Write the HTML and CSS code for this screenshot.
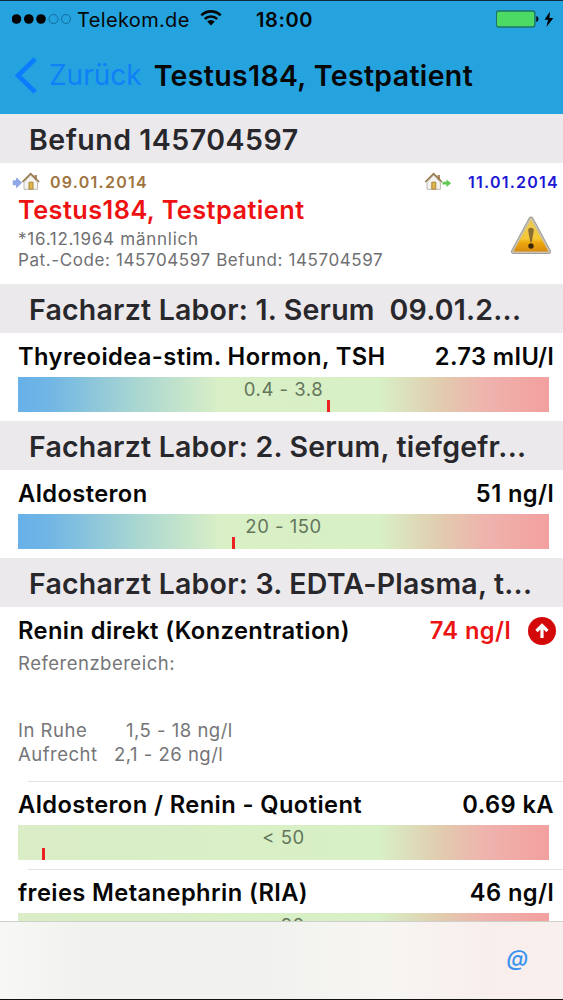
FILE: index.html
```html
<!DOCTYPE html>
<html lang="de">
<head>
  <meta charset="UTF-8">
  <title>Befund 145704597</title>
  <link rel="stylesheet" href="styles.css">
</head>
<body>
  <div class="app">
    <header class="header">
      <div class="statusbar">
        <div class="carrier">
          <svg class="signal" width="60" height="12" viewBox="0 0 60 12">
            <circle cx="4.5" cy="6" r="4.8"/>
            <circle cx="16.8" cy="6" r="4.8"/>
            <circle cx="29" cy="6" r="4.8"/>
            <circle class="off" cx="41.5" cy="6" r="4.5"/>
            <circle class="off" cx="54" cy="6" r="4.5"/>
          </svg>
          <span class="carrier-name">Telekom.de</span>
          <svg class="wifi" width="22" height="16" viewBox="0 0 22 16">
            <path class="arc" d="M1.3 5.4a13.8 13.8 0 0 1 19.4 0M4.8 9a8.8 8.8 0 0 1 12.4 0"/>
            <path d="M7.2 11.6a5.4 5.4 0 0 1 7.6 0L11 15.6z"/>
          </svg>
        </div>
        <span class="time">18:00</span>
        <svg class="battery" width="60" height="18" viewBox="0 0 60 18">
          <rect class="level" x=".3" y="1" width="38.6" height="16" rx="2.5"/>
          <path d="M40.3 6q2.2.6 2.2 3t-2.2 3z"/>
          <path d="M54 1.5L48.5 9.8h3.6L50.4 17l7-9h-4z"/>
        </svg>
      </div>
      <div class="navbar">
        <svg class="chevron" width="24" height="37" viewBox="0 0 24 37">
          <path d="M21.2 1.8L4 18.5l17.2 16.7"/>
        </svg>
        <span class="back">Zurück</span>
        <span class="title">Testus184, Testpatient</span>
      </div>
    </header>

    <main class="list">
      <h2 class="section number">Befund 145704597</h2>
      <div class="patient">
        <div class="dates">
          <svg class="house-in" width="28" height="20" viewBox="0 0 28 20">
            <path class="arrow-blue" d="M1.2 8.8h3.4V6l5 4.8-5 4.8v-2.8H1.2z"/>
            <path class="chimney" d="M22.4 3H25v5h-2.6z"/>
            <path class="wall" d="M12 10.2L18.7 3l6.8 7.2V17.3H12z"/>
            <path class="roof" d="M10.3 10l8.4-8.4 8.4 8.4"/>
            <path class="door" d="M17 10.2h4v7h-4z"/>
          </svg>
          <span class="date-in">09.01.2014</span>
          <svg class="house-out" width="28" height="20" viewBox="0 0 28 20">
            <path class="chimney" d="M13.4 3H16v5h-2.6z"/>
            <path class="wall" d="M3 10.2L9.6 3l6.8 7.2V17.3H3z"/>
            <path class="roof" d="M1.2 10l8.4-8.4L18 10"/>
            <path class="door" d="M7.8 10.2h4v7h-4z"/>
            <path class="arrow-green" d="M18.5 9.8h4V7.5l4.6 3.7-4.6 3.7v-2.3h-4z"/>
          </svg>
          <span class="date-out">11.01.2014</span>
        </div>
        <div class="patient-body">
          <div>
            <div class="patient-name">Testus184, Testpatient</div>
            <div class="patient-info born">*16.12.1964 männlich</div>
            <div class="patient-info">Pat.-Code: 145704597 Befund: 145704597</div>
          </div>
          <svg class="warning" width="42" height="42" viewBox="0 0 42 42">
            <defs>
              <linearGradient id="amber" x1="0" y1="0" x2="0" y2="1">
                <stop offset="0" stop-color="#e9c95c"/>
                <stop offset=".6" stop-color="#f6c836"/>
                <stop offset=".72" stop-color="#eda90f"/>
                <stop offset="1" stop-color="#d98a10"/>
              </linearGradient>
            </defs>
            <path class="edge" d="M21 4L3.5 36.5h35z"/>
            <path class="rim" d="M21 4L3.5 36.5h35z"/>
            <path fill="url(#amber)" d="M21 4L3.5 36.5h35z"/>
            <path class="mark" d="M18.2 15.5q0-2.8 2.8-2.8t2.8 2.8L21.8 27h-1.6z"/>
            <circle class="dot" cx="21" cy="31" r="2.7"/>
          </svg>
        </div>
      </div>

      <h2 class="section">Facharzt Labor: 1. Serum&nbsp; 09.01.2...</h2>
      <div class="result">
        <div class="result-head"><span>Thyreoidea-stim. Hormon, TSH</span><span>2.73 mIU/l</span></div>
        <div class="bar">0.4 - 3.8<i class="tick" style="left: 309px"></i></div>
      </div>

      <h2 class="section">Facharzt Labor: 2. Serum, tiefgefr...</h2>
      <div class="result">
        <div class="result-head"><span>Aldosteron</span><span>51 ng/l</span></div>
        <div class="bar">20 - 150<i class="tick" style="left: 214px"></i></div>
      </div>

      <h2 class="section">Facharzt Labor: 3. EDTA-Plasma, t...</h2>
      <div class="result tall">
        <div class="result-head">
          <span>Renin direkt (Konzentration)</span>
          <span class="high">74 ng/l
            <svg class="up" width="28" height="28" viewBox="0 0 28 28">
              <circle cx="14" cy="14" r="14"/>
              <path d="M14 21V9M8.5 14L14 8.5l5.5 5.5"/>
            </svg>
          </span>
        </div>
        <div class="reference">Referenzbereich:</div>
        <div class="ranges">
          <div><span class="in-ruhe">In Ruhe</span>1,5 - 18 ng/l</div>
          <div><span class="aufrecht">Aufrecht</span>2,1 - 26 ng/l</div>
        </div>
      </div>
      <div class="result lined">
        <div class="result-head"><span>Aldosteron / Renin - Quotient</span><span>0.69 kA</span></div>
        <div class="bar upper">&lt; 50<i class="tick" style="left: 24px"></i></div>
      </div>
      <div class="result lined">
        <div class="result-head"><span>freies Metanephrin (RIA)</span><span>46 ng/l</span></div>
        <div class="bar upper">&lt; 90</div>
      </div>
    </main>

    <footer class="toolbar"><span class="at">@</span></footer>
  </div>
</body>
</html>
```
FILE: styles.css
```css
* {
  box-sizing: border-box;
}

body {
  margin: 0;
  font-family: Inter, "Liberation Sans", sans-serif;
  background: #fff;
  color: #060606;
}

.app {
  display: flex;
  flex-direction: column;
  width: 563px;
  height: 1000px;
  overflow: hidden;
  white-space: nowrap;
  border-top: 1px solid #10283c;
  border-bottom: 1px solid #111;
}

/* header */
.header {
  flex: none;
  height: 113px;
  background: #24a3df;
}

.statusbar {
  display: grid;
  grid-template-columns: 256px 1fr 67px;
  align-items: center;
  height: 36px;
}

.carrier {
  display: flex;
  align-items: center;
  padding-left: 12px;
}

.carrier-name {
  margin: 2px 10px 0 5px;
  font-size: 20px;
  letter-spacing: 0.35px;
}

.wifi {
  margin-top: -2px;
}

.off {
  fill: none;
  stroke: #126d9c;
}

.arc {
  fill: none;
  stroke: #060606;
  stroke-width: 2.6;
}

.time {
  margin-top: 2px;
  font-size: 20px;
  font-weight: 600;
  letter-spacing: 0.6px;
}

.level {
  fill: #4cd964;
  stroke: #1c7367;
  stroke-width: 1.4;
}

.navbar {
  display: flex;
  align-items: center;
  height: 76px;
  padding-left: 14px;
}

.chevron path {
  fill: none;
  stroke: #0a7cff;
  stroke-width: 4.6;
}

.back {
  margin-left: 11px;
  font-size: 28px;
  color: #0f80f7;
}

.title {
  margin-left: 12px;
  font-size: 28.5px;
  font-weight: 600;
  letter-spacing: 0.35px;
}

/* list */
.list {
  flex: 1;
  min-height: 0;
  overflow: hidden;
}

.section {
  height: 49px;
  margin: 0;
  padding-left: 29px;
  line-height: 52px;
  font-size: 28.5px;
  font-weight: 600;
  letter-spacing: 0.22px;
  color: #28272b;
  background: #ebe9eb;
}

.section.number {
  letter-spacing: 0.52px;
}

.patient {
  height: 121px;
  padding: 9px 5px 0 12px;
}

.dates {
  display: flex;
  align-items: center;
  height: 20px;
  font-size: 16px;
  font-weight: 600;
  letter-spacing: 1.25px;
}

.date-in {
  margin: 0 auto 0 10px;
  color: #a07440;
}

.date-out {
  margin: 0 -1px 0 16px;
  color: #1c18d4;
}

.wall {
  fill: #f5f3ee;
  stroke: #bdb9b5;
}

.roof {
  fill: none;
  stroke: #97794a;
  stroke-width: 1.6;
}

.chimney {
  fill: #b08d62;
}

.door {
  fill: #dfb54a;
  stroke: #a8873e;
}

.arrow-blue {
  fill: #8fa9ea;
  stroke: #7590d8;
  stroke-width: 0.7;
}

.arrow-green {
  fill: #62c754;
}

.patient-body {
  display: flex;
  justify-content: space-between;
  padding: 0 6px;
}

.patient-name {
  height: 36px;
  line-height: 35px;
  font-size: 25.3px;
  font-weight: 600;
  letter-spacing: 0.45px;
  color: #ee1111;
}

.patient-info {
  height: 21px;
  line-height: 22px;
  font-size: 17px;
  letter-spacing: 0.6px;
  color: #707072;
}

.born {
  letter-spacing: 0.75px;
}

.warning {
  margin-top: 23px;
}

.edge,
.rim {
  fill: none;
  stroke-linejoin: round;
  stroke: #a19e98;
  stroke-width: 5;
}

.rim {
  stroke: #c8c3b2;
  stroke-width: 3;
}

.mark {
  fill: #8c6d30;
}

.dot {
  fill: #3c2608;
}

/* results */
.result {
  position: relative;
  height: 88px;
  padding: 0 9px 0 18px;
}

.result.tall {
  height: 174px;
}

.result-head {
  display: flex;
  justify-content: space-between;
  height: 44px;
  line-height: 48px;
  font-size: 23.7px;
  font-weight: 600;
  letter-spacing: 0.4px;
}

.lined::before {
  content: "";
  position: absolute;
  top: 0;
  left: 28px;
  right: 0;
  height: 1px;
  background: #e2e2e2;
}

.bar {
  position: relative;
  width: 531px;
  height: 35px;
  line-height: 25px;
  text-align: center;
  font-size: 18.5px;
  letter-spacing: 0.5px;
  color: #63765c;
  background: linear-gradient(to right, #67b1e9 0%, #71b6e5 6%, #a8d6d2 22%, #d9efc6 38%, #d8f0c6 68%, #e2caae 80%, #efb3ad 88%, #f2a09f 100%);
}

.bar.upper {
  background: linear-gradient(to right, #daedc6 0%, #d8f0c6 68%, #e2caae 80%, #efb3ad 88%, #f2a09f 100%);
}

.tick {
  position: absolute;
  bottom: 0;
  width: 3px;
  height: 12px;
  background: #ec2222;
}

.high {
  display: flex;
  align-items: center;
  gap: 17px;
  height: 48px;
  margin-right: -2px;
  color: #ec1313;
}

.up {
  margin-top: -1px;
}

.up circle {
  fill: #d40a0a;
}

.up path {
  fill: none;
  stroke: #fff;
  stroke-width: 3.2;
}

.reference,
.ranges {
  line-height: 24px;
  font-size: 18.5px;
  letter-spacing: 0.5px;
  color: #757577;
}

.ranges {
  margin-top: 43px;
}

.ranges span {
  display: inline-block;
}

.in-ruhe {
  width: 108px;
}

.aufrecht {
  width: 96px;
}

/* toolbar */
.toolbar {
  flex: none;
  height: 78px;
  padding: 16px 35px 0 0;
  text-align: right;
  border-top: 1px solid #cdd0c9;
  background: linear-gradient(to right, #f7f8f5 0%, #f1f1ef 15%, #f1f2ef 48%, #f7f5f2 68%, #f8eeec 88%, #f9efed 100%);
}

.at {
  font-size: 22px;
  line-height: 40px;
  font-weight: 500;
  font-style: italic;
  color: #3a93f0;
}
```
